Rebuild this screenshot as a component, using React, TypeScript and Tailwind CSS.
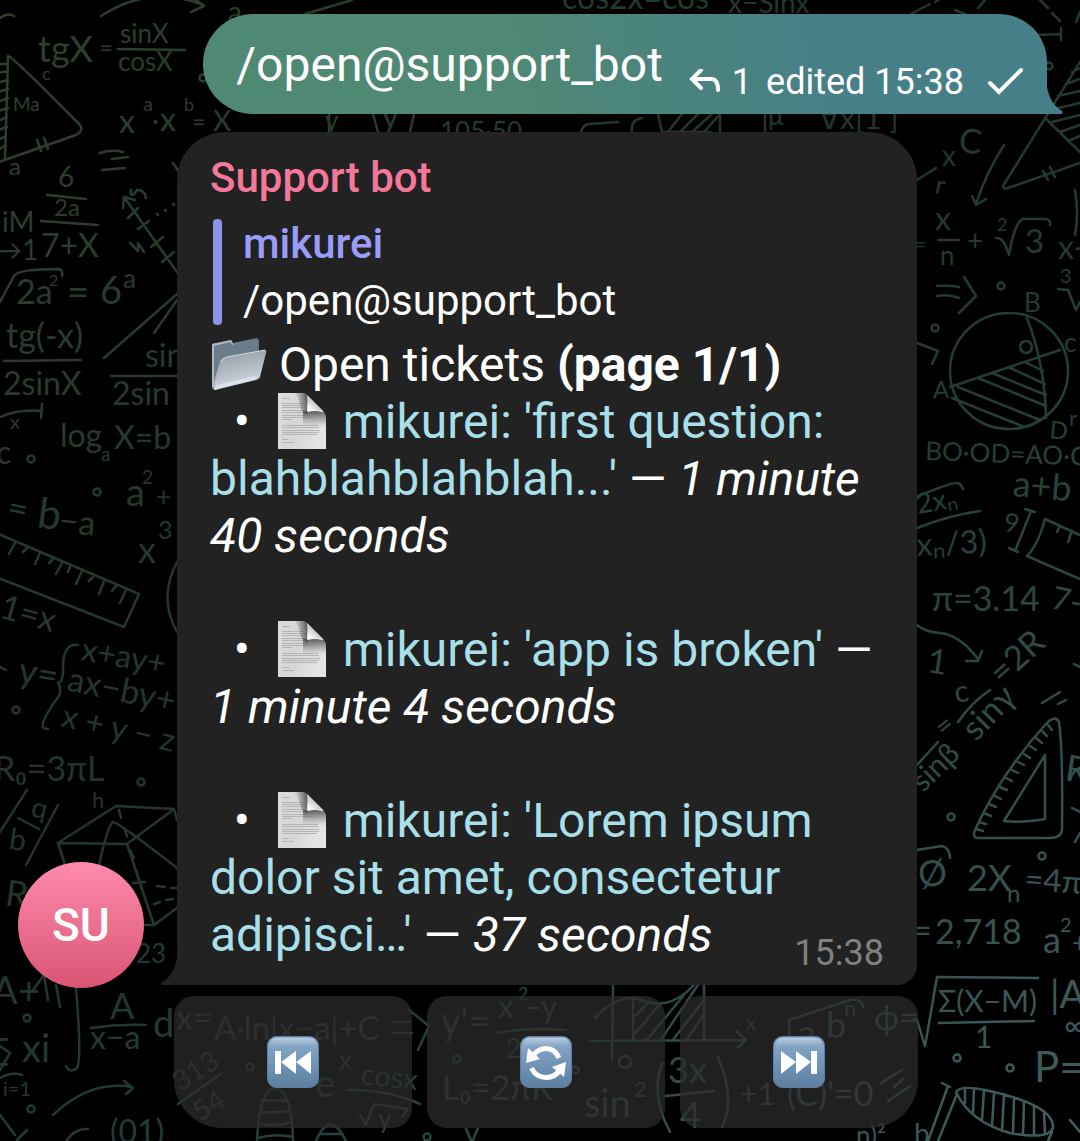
import React from "react";

type Note = [number, number, number, string, number?];

const NOTES: Note[] = [
  [38, 62, 36, "tgX"], [99, 56, 24, "="], [120, 43, 26, "sinX"], [118, 71, 26, "cosX"], [42, 80, 18, "c"],
  [13, 111, 19, "Ma"], [9, 175, 24, "a"], [119, 133, 32, "x"], [143, 111, 20, "a"], [152, 130, 26, "·"],
  [160, 131, 32, "x"], [184, 111, 18, "b"], [192, 130, 24, "="], [213, 131, 28, "X"],
  [58, 187, 28, "6"], [54, 216, 24, "2a"], [41, 257, 32, "7+X"], [2, 232, 28, "iM"], [-6, 260, 28, "→1"],
  [16, 304, 34, "2a"], [49, 286, 16, "2"], [67, 306, 38, "="], [100, 304, 38, "6"], [123, 288, 26, "a"],
  [6, 348, 34, "tg(-x)"], [3, 395, 32, "2sinX"], [145, 367, 32, "sin"], [112, 405, 32, "2sin"],
  [10, 429, 20, "x"], [-4, 464, 32, "c"], [60, 447, 32, "log"], [101, 461, 19, "a"], [114, 449, 32, "X=b"],
  [126, 506, 38, "a"], [142, 484, 19, "2"], [156, 506, 26, "+"], [158, 539, 25, "3"], [138, 563, 36, "x"],
  [6, 518, 34, "=", 12], [36, 527, 42, "b", 8], [58, 532, 34, "−a", 6], [-2, 617, 34, "1=x", 16],
  [17, 682, 36, "y=", 10], [80, 660, 32, "x+ay+", 10], [66, 690, 34, "ax−by+", 12], [60, 726, 32, "x + y − z", 13],
  [-6, 781, 34, "R₀=3πL"], [30, 816, 28, "q", 12], [8, 849, 30, "b", 8], [92, 808, 22, "h"], [4, 905, 36, "R", 8],
  [136, 963, 26, "23"], [-8, 1004, 38, "A+"], [110, 1019, 36, "A"], [90, 1049, 32, "x−a"],
  [153, 1037, 38, "d"], [176, 1030, 34, "x="], [214, 1040, 33, "A·ln|x−a|+C"],
  [22, 1062, 38, "xi"], [-14, 1066, 38, "Σ"], [3, 1096, 20, "i=1"], [110, 1143, 32, "(01)"],
  [180, 1092, 28, "313", -32], [200, 1122, 28, "54", -32], [315, 1097, 38, "e"], [339, 1070, 26, "x"],
  [360, 1084, 29, "cosx", 6], [378, 1128, 26, "y"],
  [441, 1035, 38, "y'="], [498, 1018, 32, "x"], [518, 1000, 18, "2"], [524, 1018, 30, "−y"], [506, 1058, 26, "2"],
  [442, 1100, 34, "L₀=2πR"], [584, 1117, 38, "sin"], [634, 1097, 22, "2"], [668, 1083, 36, "3x"], [680, 1128, 36, "4"],
  [740, 1105, 30, "+1"], [787, 1106, 34, "(C)'=0"], [798, 1046, 36, "a"], [826, 1038, 36, "b"], [844, 1016, 22, "n"],
  [746, 1030, 20, "x"], [874, 1030, 34, "ϕ="], [562, 9, 32, "cos2x=cos²"], [728, 13, 28, "x−Sinx"],
  [382, 128, 32, "y"], [440, 141, 26, "105·50"], [768, 125, 26, "μ"], [819, 129, 30, "∀x[1 ]"], [228, 22, 28, "a"],
  [325, 130, 26, "y"], [958, 152, 34, "C", 6], [942, 166, 28, "x"], [934, 193, 26, "r", 12],
  [935, 230, 32, "x"], [914, 252, 22, "="], [940, 265, 26, "n"], [967, 251, 28, "+"], [997, 231, 18, "2"],
  [1025, 253, 33, "3"], [1058, 259, 32, "x-"], [1060, 283, 20, "3"], [1024, 312, 26, "B"], [1064, 352, 26, "c"],
  [933, 398, 24, "A"], [1049, 438, 24, "D", 5], [925, 460, 26, "BO·OD=AO·O", 2], [1069, 426, 22, "r"],
  [1012, 496, 36, "a+b", 5], [918, 514, 28, "2xₙ", -10], [917, 556, 32, "xₙ/3)", -3], [1003, 531, 26, "9", 8],
  [932, 611, 34, "π=3.14"], [1050, 608, 32, "7-", 12], [926, 672, 34, "1", 8], [956, 703, 30, "c", -10],
  [976, 742, 34, "sinγ", -46], [1002, 686, 34, "=2R", -42], [944, 738, 28, "=", -40], [923, 793, 30, "sinβ", -44],
  [920, 888, 36, "Ø", -8], [967, 891, 36, "2X"], [1007, 902, 24, "n"], [1024, 890, 32, "=4π", 4],
  [912, 943, 34, "="], [935, 944, 34, "2,718"], [1043, 953, 36, "a"], [1060, 932, 20, "2"], [1072, 952, 26, "+"],
  [938, 1012, 30, "Σ(X−M)"], [975, 1048, 30, "1"], [1050, 1008, 38, "|A"], [1064, 1036, 30, "∞"], [1034, 1082, 42, "P="],
  [856, 1145, 26, "n)²"], [914, 1144, 28, "b"], [1064, 780, 36, "R", 8], [464, 1144, 30, "y"],
];

const RINGS = [
  [31, 459], [97, 492], [16, 710], [141, 782], [27, 1018], [31, 1109], [250, 1067], [457, 1059], [575, 1070],
  [427, 1137], [1001, 286], [935, 328], [951, 817], [1042, 856], [957, 1058], [1010, 1068], [203, 78], [1049, 66],
];

const LINES = [
  "M101 16Q150 -16 203 5M192 -3L204 6L191 12M0 18Q8 12 14 16M118 49L185 50",
  "M8 56Q12 56 80 125Q84 131 76 135L-4 163M8 56L5 160M0 64H8M-2 73L8 71M0 82L8 80M-2 92L8 89M0 101L8 98M-2 111L8 108M0 120L7 117M-2 130L7 127M-2 140L6 136M-2 150L6 145M37 140L41 151M44 138L48 149",
  "M100 153Q112 149 123 152M112 159L128 157M102 170L125 168M47 195L86 199M41 221L98 225",
  "M124 197L177 272M123 208L124 197L135 200M128 218L138 208M138 229L149 221M151 247L163 237M162 262L174 252M131 190Q130 200 137 190Q145 190 146 198M130 243L138 251L138 243L144 252M157 214L158 215M165 210L166 211M173 204L174 205",
  "M0 302L14 276Q18 269 59 269Q63 270 62 276M4 361L81 360M104 358L177 294M154 333L177 300M111 376L177 376M173 163L179 172",
  "M0 417Q20 409 42 411M42 404L41 418M-4 533L139 594L124 627L-4 577M15 543L9 554M27 548L23 552M40 553L35 564M53 559L49 563M62 563L56 574M70 567L68 572M82 571L76 584M93 577L89 581M104 581L99 594M116 586L112 591M126 590L120 603",
  "M177 562Q158 598 177 632M78 645Q64 643 63 665Q64 682 58 683Q62 688 59 696Q40 722 43 727Q44 729 48 729M-2 666L6 670",
  "M27 790L-4 838M58 805L26 865M18 818L39 829M58 843L116 806L174 809L127 844ZM58 843L65 865M127 844L154 925L177 908M99 865Q108 825 113 822Q118 822 177 868M174 809L177 820M144 925H152",
  "M119 810L121 818M124 828L127 836M130 850L134 858M136 870L139 880M133 883L145 882M157 886L165 887M171 888L177 888M154 904L160 902M166 900L173 899M33 990L44 975L48 1000M56 985L60 1007",
  "M76 988Q82 1060 77 1068Q70 1074 66 1066M91 1028Q118 1024 146 1025M53 1115Q90 1080 132 1087M124 1081L133 1088L126 1094M178 1104L222 1073M67 1140Q75 1128 88 1129M0 1046L10 1053L0 1070M-3 1080Q10 1071 22 1075M0 1115L15 1135M17 1140L27 1130",
  "M257 1141Q259 1090 275 1088Q292 1090 293 1141M262 1100L288 1101M260 1112Q275 1113 290 1111M259 1124Q275 1127 292 1122M258 1138Q275 1133 293 1137M316 1141Q330 1108 346 1141M320 1134H342M350 1090Q390 1090 420 1104M360 1115L366 1125L374 1104L408 1109L402 1117M348 1090H360",
  "M392 1022H410M393 1033H412M409 1010L429 1026L418 1050M498 1033Q530 1027 566 1030M590 1041L746 1040M736 1031L746 1040L738 1047M613 985L612 1060M595 1018Q614 997 635 998Q650 1005 665 1003Q680 1000 694 985M633 999V1040M704 985V1041M633 1018L650 1001M633 1036L660 1004M646 1041L684 995M660 1041L698 985M672 1041L704 1000M686 1041L704 1014",
  "M662 1063Q650 1095 670 1132M718 1057Q736 1100 722 1127M666 1096L714 1091M790 1048L789 1020L850 1000Q862 998 863 1008M881 1083L902 1070M894 1087L903 1079M888 1101L910 1086",
  "M305 14L352 0M373 114L378 132M414 114L410 132M658 114L662 132H710M668 132L682 114M680 132L698 114M692 132L712 114M704 132L720 114M720 114V132M765 114V132M581 132Q583 124 590 124L618 122M632 132Q630 120 642 118M329 114V132",
  "M911 14L930 4M935 2L945 -4M955 10L965 14M978 8L985 0M1040 0L1048 8M1052 13L1060 21M1038 35L1061 34M1061 28V40M1076 22L1080 12",
  "M1080 62L1003 186Q1003 190 1008 188L1080 163M1045 118L1080 152M1080 68L1072 72M1080 79L1066 84M1080 91L1058 96M1080 103L1050 110M1080 115L1052 122M1080 125L1060 132M1080 136L1068 141M1043 171L1048 180M1050 167L1055 177M1004 145Q985 175 976 204M972 196L976 205L986 199M917 180L936 168M1075 190Q1079 215 1075 235",
  "M938 240L959 240M996 238Q1004 237 1009 255Q1014 225 1022 219L1046 219Q1051 220 1050 225M1058 289L1068 290L1076 310L1080 302M937 286Q950 285 959 287M937 296Q950 294 959 298M964 277L976 296L959 313M917 343L938 351L932 364",
  "M1027 318Q1045 365 1046 418M950 387L1060 350M952 398L1022 426M958 387L1040 420M978 378L1046 406M992 373L1046 395M1008 367L1045 384M1025 362L1043 371",
  "M917 497Q955 480 960 484L963 489M917 528Q950 515 980 511M1025 509L1035 512M1031 511L1015 551M1009 548L1018 552M1080 535L1045 519Q1038 545 1027 556L1080 579M1060 526L1057 532M1072 531L1068 542",
  "M917 625Q925 632 940 633Q960 635 978 659M966 661L978 661L982 651M958 722Q972 702 990 690M1042 703L1060 692M1058 704L1066 700M1074 664L1080 667M917 765L938 742",
  "M1045 725Q1055 714 1059 722Q1063 750 1062 830Q1061 838 1050 838L978 838Q972 838 975 830Q1000 775 1045 725ZM1045 755V819Q1020 823 1004 821L1045 755M1048 725L1052 730M1042 731L1047 736M1036 738L1042 743M1030 746L1036 750M1024 754L1030 758M1018 762L1024 765M1012 770L1018 773M1006 778L1012 781M1000 787L1007 790M995 796L1001 799M989 804L996 807M984 813L991 816M979 822L986 824M976 829L983 831",
  "M917 850L942 846Q950 848 950 858M914 1018L917 1020L925 1046L937 977L1038 978M939 1023L1034 1021M942 1083L950 1087M948 1086L928 1141M957 1094L938 1141M956 1092Q960 1085 985 1090Q1055 1105 1053 1128Q1048 1140 1010 1133Q970 1122 956 1092M965 1089V1103M974 1089L973 1112M984 1090L982 1120M994 1092L992 1126M1004 1094L1002 1131M1014 1097L1013 1134M1024 1101L1023 1135M1034 1106L1034 1135M1044 1113L1045 1134M1052 1132L1048 1141M1070 780Q1073 770 1080 768M1070 1120L1080 1132M1072 808L1080 812M1075 842L1080 833",
];

function Wallpaper() {
  return (
    <svg
      className="absolute inset-0 h-full w-full"
      viewBox="0 0 1080 1141"
      preserveAspectRatio="xMidYMid slice"
      aria-hidden="true"
    >
      <defs>
        <linearGradient id="chalk" gradientUnits="userSpaceOnUse" x1="0" y1="0" x2="1080" y2="1141">
          <stop offset="0" stopColor="#2f402e" />
          <stop offset="0.4" stopColor="#21352b" />
          <stop offset="0.62" stopColor="#233c38" />
          <stop offset="1" stopColor="#41605f" />
        </linearGradient>
      </defs>
      <g fill="none" stroke="url(#chalk)" strokeWidth="2.5" strokeLinecap="round" strokeLinejoin="round">
        {LINES.map((d) => (
          <path key={d} d={d} />
        ))}
        {RINGS.map(([x, y]) => (
          <circle key={`${x}-${y}`} cx={x} cy={y} r="3.5" />
        ))}
        <ellipse cx="1009" cy="371" rx="59" ry="58" />
        <circle cx="1026" cy="347" r="6" />
        <circle cx="625" cy="1062" r="6" />
      </g>
      <g fill="url(#chalk)" fontFamily="Lato, 'Noto Sans', sans-serif" fontWeight="400">
        {NOTES.map(([x, y, size, text, turn], i) => (
          <text key={i} x={x} y={y} fontSize={size} transform={`rotate(${turn ?? 0} ${x} ${y})`}>
            {text}
          </text>
        ))}
      </g>
    </svg>
  );
}

function FolderIcon() {
  return (
    <svg className="inline-block h-[57px] w-[57px] align-top" viewBox="0 0 57 57" role="img" aria-label="Open folder">
      <defs>
        <linearGradient id="folderBack" x1="0" y1="0" x2="1" y2="1">
          <stop offset="0" stopColor="#8c9aa5" />
          <stop offset="1" stopColor="#43525f" />
        </linearGradient>
        <linearGradient id="folderFront" x1="0.3" y1="0" x2="0.6" y2="1">
          <stop offset="0" stopColor="#949da7" />
          <stop offset="0.5" stopColor="#b3bbc4" />
          <stop offset="1" stopColor="#dbe1ea" />
        </linearGradient>
      </defs>
      <path d="M2 8L21 4L23 7L47 2L49 4V42L5 54L2 52Z" fill="url(#folderBack)" />
      <path d="M2 8L21 4L23 8L20 20L10 26L4 52L2 51Z" fill="#b0bac4" />
      <path d="M4 10L20 6L22 9L47 4V15L22 20L13 22Q10 24 9 28L4 46Z" fill="#6c7d8a" />
      <path d="M10 27Q12 22 17 21L55 14Q57 14 56 17L50 41Q49 43 46 44L5 54Q3 54 4 51Z" fill="url(#folderFront)" />
      <path d="M11 26Q13 22 17 21L55 14" fill="none" stroke="#d3dae2" />
      <path d="M5 53L46 43L45 40L7 49Z" fill="#e9eef7" opacity="0.6" />
    </svg>
  );
}

function PageIcon() {
  return (
    <svg className="inline-block h-[57px] w-[57px] align-top" viewBox="0 0 57 57" role="img" aria-label="Document">
      <defs>
        <linearGradient id="sheet" x1="0" y1="0" x2="1" y2="0.3">
          <stop offset="0" stopColor="#dcdcdc" />
          <stop offset="0.5" stopColor="#d6d6d6" />
          <stop offset="1" stopColor="#e4e4e4" />
        </linearGradient>
        <linearGradient id="curl" x1="0" y1="1" x2="0.6" y2="0.3">
          <stop offset="0.3" stopColor="#f8f8f8" />
          <stop offset="1" stopColor="#b4b4b4" />
        </linearGradient>
        <linearGradient id="shadeLeft" x1="1" y1="0" x2="0" y2="0.2">
          <stop offset="0" stopColor="#404040" />
          <stop offset="0.5" stopColor="#6a6a6a" stopOpacity="0.6" />
          <stop offset="1" stopColor="#8a8a8a" stopOpacity="0" />
        </linearGradient>
        <linearGradient id="shadeBelow" x1="0" y1="0" x2="0" y2="1">
          <stop offset="0" stopColor="#4a4a4a" />
          <stop offset="0.5" stopColor="#777777" stopOpacity="0.6" />
          <stop offset="1" stopColor="#9a9a9a" stopOpacity="0" />
        </linearGradient>
        <clipPath id="sheetEdge">
          <path d="M4 0H27Q32 0 35 4L49 18Q52 21 52 27V56H4Z" />
        </clipPath>
      </defs>
      <g clipPath="url(#sheetEdge)">
        <rect x="4" y="0" width="48" height="57" fill="url(#sheet)" />
        <path
          d="M8 5.500H16M8 10.500H30M8 12.500H32M8 14.500H31M8 17.500H31M8 19.500H33M8 22.500H36M8 24.500H40M8 26.500H18M8 32.500H44M8 34.500H45M8 37.500H46M8 39.500H45M8 41.500H43M8 46.500H15M8 49.500H20"
          stroke="#b4b4b4"
          strokeWidth="1"
        />
        <path d="M20 -2H34V22Q27 20 26 12Q24 4 20 -2Z" fill="url(#shadeLeft)" />
        <path d="M29 18H54V34H29Z" fill="url(#shadeBelow)" opacity="0.9" />
      </g>
      <path d="M33 2L49 18Q50 20 47 19Q41 17 34 19Q33 19 33 17Q34 9 33 2Z" fill="url(#curl)" />
    </svg>
  );
}

function TileIcon({ children }: { children: React.ReactNode }) {
  return (
    <svg className="h-[54px] w-[54px]" viewBox="0 0 54 54" aria-hidden="true">
      <defs>
        <linearGradient id="tile" x1="0" y1="0" x2="0" y2="1">
          <stop offset="0" stopColor="#8fadca" />
          <stop offset="0.35" stopColor="#7a9cbf" />
          <stop offset="1" stopColor="#5c7e9f" />
        </linearGradient>
        <linearGradient id="gloss" x1="0" y1="0" x2="0" y2="1">
          <stop offset="0" stopColor="#bccfe0" />
          <stop offset="1" stopColor="#86a7c7" stopOpacity="0.1" />
        </linearGradient>
      </defs>
      <rect x="1.500" y="1.500" width="51" height="51" rx="9" fill="url(#tile)" stroke="#5d7fa3" />
      <path d="M4 14V10Q4 3 11 3H43Q50 3 50 10V14Q46 11 40 11H14Q8 11 4 14Z" fill="url(#gloss)" />
      <g fill="#fff">{children}</g>
    </svg>
  );
}

const tickets = [
  { title: "mikurei: 'first question: blahblahblahblah...'", age: "1 minute 40 seconds" },
  { title: "mikurei: 'app is broken'", age: "1 minute 4 seconds" },
  { title: "mikurei: 'Lorem ipsum dolor sit amet, consectetur adipisci…'", age: "37 seconds" },
];

const keyClass = "flex h-[132px] flex-1 items-center justify-center bg-[#2c2c2c]/72";

export default function App() {
  return (
    <main className="relative flex min-h-screen flex-col overflow-hidden bg-black pt-[14px] pb-[13px] font-[Roboto,'Liberation_Sans',sans-serif] text-white">
      <Wallpaper />

      <section className="relative mr-[33px] flex h-[100px] items-center self-end rounded-l-[50px] rounded-tr-[48px] bg-[linear-gradient(75deg,#4f8873_35%,#477f88_75%)] pr-6 pl-[33px]">
        <p className="text-[48px] leading-[57px]">/open@support_bot</p>
        <div className="mt-9 ml-[26px] flex items-center text-[36px] leading-[42px]">
          <svg className="h-[26px] w-[32px]" viewBox="0 0 32 26" fill="none" stroke="#fff" strokeWidth="4" strokeLinecap="round" role="img" aria-label="Replies">
            <path d="M12 1L3 10L12 19M3 10H22Q29 10 29 21" />
          </svg>
          <span className="ml-[11px]">1</span>
          <span className="ml-[14px]">edited 15:38</span>
          <svg className="ml-[23px] h-[30px] w-[36px]" viewBox="0 0 36 30" fill="none" stroke="#fff" strokeWidth="4" strokeLinecap="round" role="img" aria-label="Sent">
            <path d="M3 16L12 25L34 3" />
          </svg>
        </div>
        <svg className="absolute -right-4 bottom-0 h-[40px] w-[17px]" viewBox="0 0 17 40" aria-hidden="true">
          <path d="M0 0Q0 28 16 37Q17 38 16 40H0Z" fill="#477f88" />
        </svg>
      </section>

      <div className="relative mt-[18px] flex items-end gap-[33px] pr-4 pl-[18px]">
        <div className="-mb-[3px] flex h-[126px] w-[126px] shrink-0 items-center justify-center rounded-full bg-linear-to-b from-[#ff8aae] to-[#d95574] text-[46px] font-medium">
          SU
        </div>
        <article className="relative max-w-[740px] min-w-0 flex-1 rounded-t-[48px] rounded-br-[20px] bg-[#212221] px-[33px] pt-[21px] pb-[22px]">
          <h1 className="text-[42px] leading-[50px] font-medium text-[#f5789c]">Support bot</h1>
          <blockquote className="mt-4 mb-[11px] ml-[3px] flex gap-[21px]">
            <span className="w-[9px] rounded-[4px] bg-[#8f93e6]" />
            <div className="flex flex-col gap-2 text-[42px] leading-[49px]">
              <cite className="font-medium text-[#999cf8] not-italic">mikurei</cite>
              <p>/open@support_bot</p>
            </div>
          </blockquote>
          <div className="text-[48px] leading-[57px]">
            <h2 className="font-normal">
              <FolderIcon /> Open tickets <span className="font-bold">(page 1/1)</span>
            </h2>
            <ul className="flex flex-col gap-[57px]">
              {tickets.map((ticket) => (
                <li key={ticket.age}>
                  {"\u00a0\u00a0•\u00a0\u00a0"}
                  <PageIcon />{" "}
                  <a href="#ticket" className="text-[#a8dfe8]">
                    {ticket.title}
                  </a>
                  {" — "}
                  <em>{ticket.age}</em>
                </li>
              ))}
            </ul>
          </div>
          <time className="absolute right-[33px] bottom-[11px] text-[36px] leading-[42px] text-[#808180]">15:38</time>
          <svg className="absolute bottom-0 -left-4 h-[36px] w-[17px]" viewBox="0 0 17 36" aria-hidden="true">
            <path d="M17 0Q16 25 1 33Q-1 34 1 36H17Z" fill="#212221" />
          </svg>
        </article>
      </div>

      <nav className="relative mt-[11px] mr-[13px] ml-[174px] flex max-w-[744px] gap-[15px]">
        <button type="button" aria-label="First page" className={`${keyClass} rounded-[20px] rounded-bl-[48px]`}>
          <TileIcon>
            <path d="M9 16H15V39H9ZM30 16V39L15 27ZM45 16V39L30 27Z" />
          </TileIcon>
        </button>
        <button type="button" aria-label="Refresh" className={`${keyClass} rounded-[20px]`}>
          <TileIcon>
            <path d="M14 21Q19 13.500 27 13.500Q36 13.500 40 23" fill="none" stroke="#fff" strokeWidth="5" />
            <path d="M9 13L7 28L21 24Z" />
            <path d="M12.500 33Q17 42.500 27 42.500Q36 42.500 41 35" fill="none" stroke="#fff" strokeWidth="5" />
            <path d="M47 27L33 32L45 42Z" />
          </TileIcon>
        </button>
        <button type="button" aria-label="Last page" className={`${keyClass} rounded-[20px] rounded-br-[48px]`}>
          <TileIcon>
            <path d="M9 16V39L24 27ZM24 16V39L39 27ZM39 16H45V39H39Z" />
          </TileIcon>
        </button>
      </nav>
    </main>
  );
}
